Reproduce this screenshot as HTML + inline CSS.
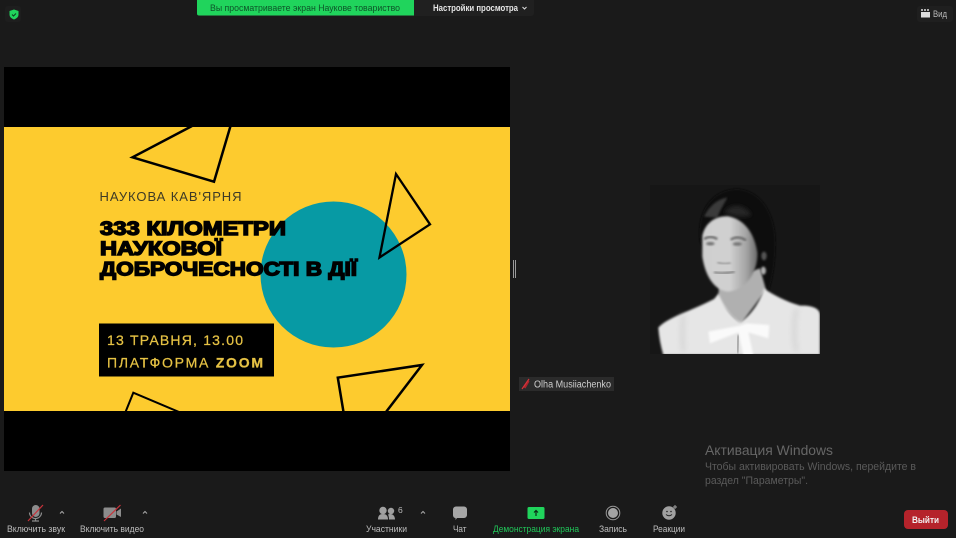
<!DOCTYPE html>
<html><head><meta charset="utf-8"><title>Zoom</title>
<style>
html,body{margin:0;padding:0;background:#1a1a1a;width:956px;height:538px;overflow:hidden}
svg{display:block}
text{font-family:"Liberation Sans","DejaVu Sans",sans-serif}
.l{font-size:9.5px;fill:#bcbcbc}
</style></head><body>
<svg width="956" height="538" viewBox="0 0 956 538" xmlns="http://www.w3.org/2000/svg">
<defs>
<filter id="b1" x="-30%" y="-30%" width="160%" height="160%"><feGaussianBlur stdDeviation="9"/></filter>
<filter id="b2" x="-30%" y="-30%" width="160%" height="160%"><feGaussianBlur stdDeviation="3.500"/></filter>
<filter id="b3" x="-30%" y="-30%" width="160%" height="160%"><feGaussianBlur stdDeviation="6"/></filter>
<linearGradient id="fg" x1="0" y1="0" x2="1" y2="0"><stop offset="0" stop-color="#cfcfcf"/><stop offset=".5" stop-color="#d0d0d0"/><stop offset=".8" stop-color="#a4a4a4"/><stop offset="1" stop-color="#6a6a6a"/></linearGradient>
<clipPath id="ph"><rect x="650" y="185" width="170" height="169"/></clipPath>
<clipPath id="yl"><rect x="4" y="127" width="506" height="284"/></clipPath>
</defs>
<rect width="956" height="538" fill="#1a1a1a"/>

<!-- top bar -->
<rect x="5" y="6" width="16" height="16" rx="3" fill="#1e1e1e"/>
<rect x="197" y="-4" width="337" height="20" rx="3" fill="#202020"/>
<path d="M197 0H414V15.500H199a2 2 0 0 1-2-2Z" fill="#20d45c"/>
<text x="210" y="11" font-size="8.800" fill="#0d5529" textLength="190" lengthAdjust="spacingAndGlyphs">Вы просматриваете экран Наукове товариство</text>
<text x="433" y="11" font-size="8.800" font-weight="bold" fill="#e6e6e6" textLength="85" lengthAdjust="spacingAndGlyphs">Настройки просмотра</text>
<path d="M522.500 7l2 2 2-2" fill="none" stroke="#ddd" stroke-width="1"/>
<path d="M14 9.500l4.500 1.500v3.500c0 2.500-2 4-4.500 5-2.500-1-4.500-2.500-4.500-5V11Z" fill="#20d45c"/>
<path d="M12 14.500l1.500 1.500 2.500-2.500" fill="none" stroke="#0d3d1e" stroke-width="1"/>
<rect x="917" y="6" width="36" height="16" rx="3" fill="#1f1f1f"/>
<path d="M921 12h9v5.500h-9Z" fill="#ddd"/><path d="M921 10h9" stroke="#ddd" stroke-width="1.500" stroke-dasharray="2 1"/>
<text x="933" y="17" font-size="9" fill="#bbb" textLength="14" lengthAdjust="spacingAndGlyphs">Вид</text>

<!-- slide -->
<rect x="4" y="67" width="506" height="404" fill="#000"/>
<rect x="4" y="127" width="506" height="284" fill="#fdcb2e"/>
<circle cx="333.500" cy="274.500" r="73" fill="#079aa4"/>
<g clip-path="url(#yl)" fill="none" stroke="#000" stroke-linejoin="miter">
<path d="M192 126L132.500 157.300 214 181.700 230.500 126" stroke-width="2.500"/>
<path d="M396 174L430 224.300 379.500 257.500Z" stroke-width="2.300"/>
<path d="M125.500 412L133.300 392.700 179 412" stroke-width="2"/>
<path d="M343.500 412L337.800 377.700 422 365 386 412" stroke-width="2.500"/>
</g>
<text x="99.500" y="201" font-size="13" fill="#3d3a26" textLength="142" lengthAdjust="spacing">НАУКОВА КАВ'ЯРНЯ</text>
<g font-weight="bold" font-size="19.500" fill="#000" stroke="#000" stroke-width="1.400">
<text x="100" y="235" textLength="186" lengthAdjust="spacingAndGlyphs">333 КІЛОМЕТРИ</text>
<text x="100" y="255" textLength="122" lengthAdjust="spacingAndGlyphs">НАУКОВОЇ</text>
<text x="100" y="275.500" textLength="257" lengthAdjust="spacingAndGlyphs">ДОБРОЧЕСНОСТІ В ДІЇ</text>
</g>
<rect x="99" y="323.500" width="175" height="53" fill="#000"/>
<g stroke="#e6c244" stroke-width=".25">
<text x="107" y="345" font-size="14" fill="#e6c244" textLength="136" lengthAdjust="spacing">13 ТРАВНЯ, 13.00</text>
<text x="107" y="367.500" font-size="14" fill="#e6c244" textLength="156" lengthAdjust="spacing">ПЛАТФОРМА <tspan font-weight="bold">ZOOM</tspan></text>
</g>

<!-- divider -->
<rect x="513" y="260" width="1" height="18" fill="#9a9a9a"/>
<rect x="515" y="260" width="1" height="18" fill="#9a9a9a"/>

<!-- portrait -->
<rect x="650" y="185" width="170" height="169" fill="#161616"/>
<g clip-path="url(#ph)"><g transform="translate(640 175) scale(.3333)">
<path d="M180 200C170 100 220 45 290 42 365 45 408 120 406 210 405 270 395 330 380 360L250 360Z" fill="#0c0c0c" filter="url(#b2)"/>
<path d="M192 125C210 90 235 72 262 68 250 90 238 110 232 128Z" fill="#3a3a3a" filter="url(#b2)"/>
<path d="M252 112C275 85 310 85 335 120 310 128 280 125 252 112Z" fill="#272727" filter="url(#b3)"/>
<path d="M240 320L232 380 300 450 378 345 360 280Z" fill="#b0b0b0" filter="url(#b2)"/>
<path d="M187 182C195 145 225 122 265 124 310 132 342 170 352 232 355 285 322 345 265 350 222 348 195 300 187 245Z" fill="url(#fg)" filter="url(#b2)"/>
<path d="M192 192q20-12 40 0M272 194q22-14 46 2" fill="none" stroke="#5a5a5a" stroke-width="6" filter="url(#b2)"/>
<ellipse cx="211" cy="206" rx="13" ry="5" fill="#707070" filter="url(#b2)"/>
<ellipse cx="292" cy="207" rx="14" ry="5" fill="#707070" filter="url(#b2)"/>
<path d="M222 292q30 6 62-2" fill="none" stroke="#7a7a7a" stroke-width="6" filter="url(#b2)"/>
<path d="M232 262q20 8 40 2" fill="none" stroke="#999" stroke-width="6" filter="url(#b2)"/>
<ellipse cx="370" cy="287" rx="8" ry="12" fill="#b0b0b0" filter="url(#b2)"/>
<ellipse cx="372" cy="243" rx="8" ry="13" fill="#555" filter="url(#b2)"/>
<path d="M55 458C85 425 150 410 222 372L236 356C250 395 275 425 300 442 335 420 360 380 372 340 400 360 435 378 480 392 515 390 540 400 540 420V540H70Q58 500 55 458Z" fill="#e6e6e6" filter="url(#b2)"/>
<path d="M300 452L205 470 210 505 295 472 310 540 340 540 325 472 385 490 388 450 320 445Z" fill="#fafafa" filter="url(#b2)"/>
<path d="M295 480L292 535" stroke="#777" stroke-width="5" fill="none" filter="url(#b2)"/>
<path d="M470 400q-15 70 0 130M130 420q-5 60 0 110" stroke="#c8c8c8" stroke-width="7" fill="none" filter="url(#b1)"/>
</g></g>

<!-- name tag -->
<rect x="519" y="377" width="95" height="14" fill="#2b2b2b"/>
<path d="M523 387l5-7 1.500 1.500-4 7Z" fill="#a8262c"/><path d="M522 389l7-10" stroke="#d8323a" stroke-width="1.200"/>
<text x="534" y="387.500" font-size="10" fill="#cfcfcf" textLength="77" lengthAdjust="spacingAndGlyphs">Olha Musiiachenko</text>

<!-- activation -->
<text x="705" y="455" font-size="14" fill="#666" textLength="128" lengthAdjust="spacingAndGlyphs">Активация Windows</text>
<text x="705" y="470" font-size="11" fill="#5a5a5a" textLength="211" lengthAdjust="spacingAndGlyphs">Чтобы активировать Windows, перейдите в</text>
<text x="705" y="484" font-size="11" fill="#5a5a5a" textLength="103" lengthAdjust="spacingAndGlyphs">раздел "Параметры".</text>

<!-- toolbar: mute -->
<rect x="32" y="505" width="7.500" height="12" rx="3.700" fill="#8c8c8c"/>
<path d="M29.500 512.500a6 6 0 0 0 12 0M35.500 518.500v2.500M32 521h7" fill="none" stroke="#8c8c8c" stroke-width="1.200"/>
<path d="M28 521L43 505" stroke="#c8323a" stroke-width="1.200"/>
<text class="l" x="7" y="532" textLength="58" lengthAdjust="spacingAndGlyphs">Включить звук</text>
<path d="M60 513.500l2-2 2 2" fill="none" stroke="#aaa" stroke-width="1"/>
<!-- video -->
<rect x="103.500" y="507.500" width="12.500" height="10.500" rx="1.500" fill="#8c8c8c"/>
<path d="M116.500 511.500L121 508.500V517L116.500 514.500Z" fill="#8c8c8c"/>
<path d="M104 521L120.500 505" stroke="#c8323a" stroke-width="1.200"/>
<text class="l" x="80" y="532" textLength="64" lengthAdjust="spacingAndGlyphs">Включить видео</text>
<path d="M143 513.500l2-2 2 2" fill="none" stroke="#aaa" stroke-width="1"/>
<!-- participants -->
<circle cx="383" cy="510.500" r="3.700" fill="#a0a0a0"/><circle cx="391" cy="511" r="3.200" fill="#a0a0a0"/>
<path d="M378 519.500c0-4 2-5.500 5-5.500s5 1.500 5 5.500Z" fill="#a0a0a0"/><path d="M389 519.500c0-2.500-.5-4-1-5 3-1.500 7 0 7 5Z" fill="#a0a0a0"/>
<text x="398" y="513" font-size="8.500" fill="#bbb">6</text>
<text class="l" x="366" y="532" textLength="41" lengthAdjust="spacingAndGlyphs">Участники</text>
<path d="M421 513.500l2-2 2 2" fill="none" stroke="#aaa" stroke-width="1"/>
<!-- chat -->
<path d="M455.500 506.500h8.500a3 3 0 0 1 3 3v5.500a3 3 0 0 1-3 3h-7l-1.500 2v-2a3 3 0 0 1-2.500-3v-5.500a3 3 0 0 1 3-3Z" fill="#a6a6a6"/>
<text class="l" x="453" y="532" textLength="13.500" lengthAdjust="spacingAndGlyphs">Чат</text>
<!-- share -->
<rect x="527.500" y="507" width="17" height="12" rx="1.500" fill="#20d45c"/>
<path d="M536 516v-5M534 512.500l2-2 2 2" fill="none" stroke="#0b2c15" stroke-width="1.200"/>
<text x="493" y="532" font-size="9.500" fill="#20c659" textLength="86" lengthAdjust="spacingAndGlyphs">Демонстрация экрана</text>
<!-- record -->
<circle cx="613" cy="513" r="6.800" fill="none" stroke="#9a9a9a" stroke-width="1"/>
<circle cx="613" cy="513" r="5" fill="#a4a4a4"/>
<text class="l" x="599" y="532" textLength="28" lengthAdjust="spacingAndGlyphs">Запись</text>
<!-- reactions -->
<circle cx="669" cy="513" r="6.700" fill="#a0a0a0"/>
<circle cx="667" cy="511.500" r=".8" fill="#222"/><circle cx="671" cy="511.500" r=".8" fill="#222"/>
<path d="M666 514.500q3 2.500 6 0" fill="none" stroke="#222" stroke-width=".9"/>
<path d="M673 507h4M675 505v4" stroke="#a0a0a0" stroke-width="1"/>
<text class="l" x="653" y="532" textLength="32" lengthAdjust="spacingAndGlyphs">Реакции</text>
<!-- leave -->
<rect x="904" y="510" width="44" height="19" rx="4" fill="#b5232b"/>
<text x="912" y="523" font-size="9.500" font-weight="bold" fill="#f2f2f2" textLength="27" lengthAdjust="spacingAndGlyphs">Выйти</text>
</svg>
</body></html>
